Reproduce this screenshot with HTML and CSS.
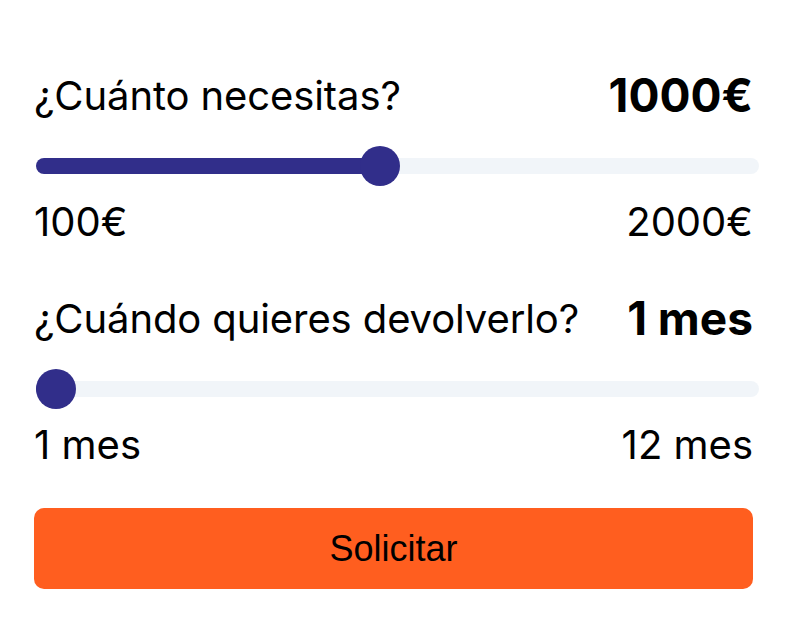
FILE: index.html
```html
<!DOCTYPE html>
<html lang="es">
<head>
    <meta charset="UTF-8">
    <meta name="viewport" content="width=device-width, initial-scale=1.0">
    <title>Simulador de préstamo</title>
    <link rel="stylesheet" href="styles.css">
</head>
<body>
    <div class="loan">
        <div class="field">
            <div class="field-head">
                <span class="field-label">¿Cuánto necesitas?</span>
                <span class="field-value" id="amountValue">1000€</span>
            </div>
            <input type="range" class="slider" id="amount" min="100" max="2000" step="100" value="1000">
            <div class="field-range">
                <span>100€</span>
                <span>2000€</span>
            </div>
        </div>
        <div class="field">
            <div class="field-head">
                <span class="field-label">¿Cuándo quieres devolverlo?</span>
                <span class="field-value" id="monthsValue">1 mes</span>
            </div>
            <input type="range" class="slider" id="months" min="1" max="12" step="1" value="1">
            <div class="field-range">
                <span>1 mes</span>
                <span>12 mes</span>
            </div>
        </div>
        <button class="submit">Solicitar</button>
    </div>
    <script>
        function paintSlider(slider) {
            const min = parseFloat(slider.min);
            const max = parseFloat(slider.max);
            const ratio = (parseFloat(slider.value) - min) / (max - min);
            const width = slider.clientWidth;
            // fill reaches the centre of the 40px thumb
            const fill = 20 + ratio * (width - 40);
            slider.style.setProperty("--fill", fill + "px");
        }
        function update() {
            const amount = document.getElementById("amount");
            const months = document.getElementById("months");
            document.getElementById("amountValue").innerText = `${amount.value}€`;
            document.getElementById("monthsValue").innerText = `${months.value} mes`;
            paintSlider(amount);
            paintSlider(months);
        }
        document.getElementById("amount").addEventListener("input", update);
        document.getElementById("months").addEventListener("input", update);
        update();
    </script>
</body>
</html>
```

FILE: styles.css
```css
body {
    margin: 0;
    font-family: 'Inter', 'Liberation Sans', sans-serif;
    background: #ffffff;
    color: #000000;
}
.loan {
    padding: 67px 34px 0 34px;
    display: flex;
    flex-direction: column;
    gap: 39px;
}
.field + .field {
    margin-top: 5px;
}
.field-head {
    display: flex;
    justify-content: space-between;
    align-items: center;
}
.field-label {
    font-size: 40px;
    letter-spacing: -0.1px;
}
.field-value {
    font-size: 46px;
    font-weight: 700;
}
.field-range {
    display: flex;
    justify-content: space-between;
    font-size: 40px;
}
.slider {
    -webkit-appearance: none;
    appearance: none;
    display: block;
    width: calc(100% + 4px);
    height: 40px;
    margin: 23px 0 11px 2px;
    background: transparent;
    --fill: 0px;
}
.slider:focus {
    outline: none;
}
.slider::-webkit-slider-runnable-track {
    height: 16px;
    border-radius: 8px;
    background: linear-gradient(to right, #312e8a var(--fill), #f1f5f9 var(--fill));
}
.slider::-webkit-slider-thumb {
    -webkit-appearance: none;
    width: 40px;
    height: 40px;
    margin-top: -12px;
    border-radius: 50%;
    background: #312e8a;
    border: none;
    cursor: pointer;
}
.submit {
    width: 100%;
    height: 81px;
    border: none;
    border-radius: 10px;
    background: #ff5e1f;
    color: #000000;
    font-family: 'Liberation Sans', Arial, sans-serif;
    font-size: 36px;
    cursor: pointer;
}
```
